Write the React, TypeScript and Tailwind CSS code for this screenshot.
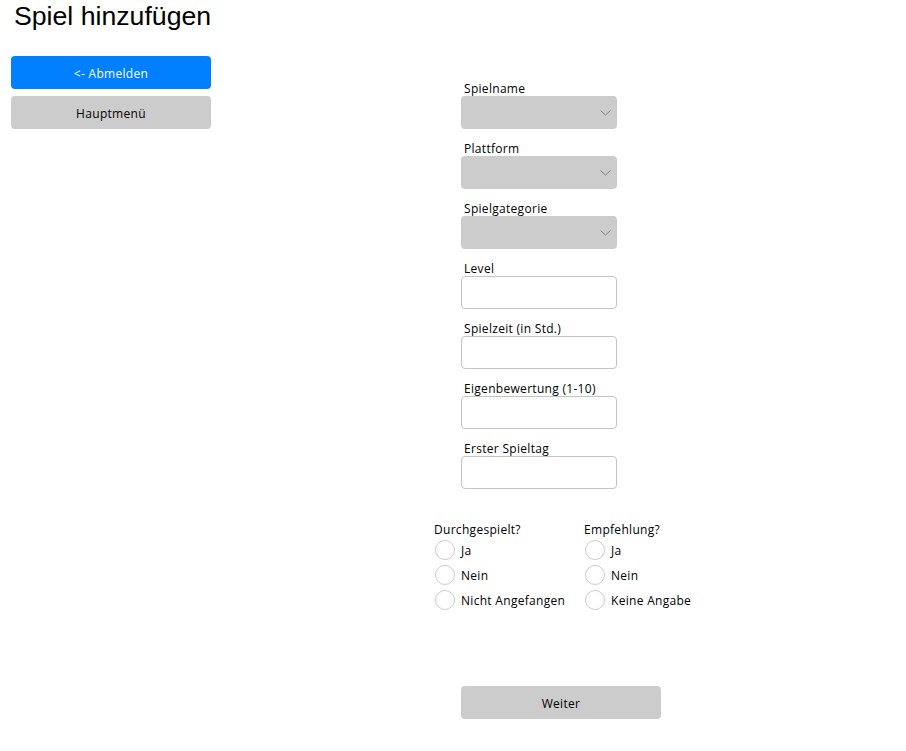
import React from "react";

const Chevron = () => (
  <svg width="11" height="6" viewBox="0 0 11 6" className="absolute right-[6px] top-[14px]">
    <path d="M0.5 0.5 L5.5 5 L10.5 0.5" fill="none" stroke="#808080" strokeWidth="1" />
  </svg>
);

const SelectField = ({ label }: { label: string }) => (
  <div className="flex flex-col">
    <div className="h-[16px] leading-[18px] pl-[3px] text-black">{label}</div>
    <div className="relative h-[33px] w-[156px] rounded-[4px] bg-[#cccccc]">
      <Chevron />
    </div>
  </div>
);

const InputField = ({ label }: { label: string }) => (
  <div className="flex flex-col">
    <div className="h-[16px] leading-[18px] pl-[3px] text-black">{label}</div>
    <div className="h-[33px] w-[156px] rounded-[4px] border border-[#c4c4c4] bg-white" />
  </div>
);

const RadioGroup = ({ title, options }: { title: string; options: string[] }) => (
  <div className="flex w-[150px] flex-col">
    <div className="h-[16px] leading-[18px] text-black">{title}</div>
    {options.map((o) => (
      <div key={o} className="flex h-[25px] items-center">
        <div className="ml-[1px] h-[20px] w-[20px] rounded-full border border-[#cdcdcd] bg-white" />
        <span className="ml-[6px] pt-[2px] text-black whitespace-nowrap">{o}</span>
      </div>
    ))}
  </div>
);

export default function App() {
  return (
    <div
      className="flex h-[751px] w-[906px] bg-white text-[12px] tracking-[0.3px]"
      style={{ fontFamily: '"Open Sans", "Noto Sans", sans-serif' }}
    >
      <div className="flex w-[211px] shrink-0 flex-col pl-[11px]">
        <h1
          className="whitespace-nowrap pl-[3px] text-[26.67px] leading-[32px] tracking-normal text-black"
          style={{ fontFamily: '"Liberation Sans", Arial, sans-serif' }}
        >
          Spiel hinzufügen
        </h1>
        <div className="mt-[24px] flex flex-col gap-[7px]">
          <button className="flex h-[33px] w-[200px] items-center justify-center rounded-[4px] bg-[#0080ff] pt-[2px] text-white">
            &lt;- Abmelden
          </button>
          <button className="flex h-[33px] w-[200px] items-center justify-center rounded-[4px] bg-[#cccccc] pt-[2px] text-black">
            Hauptmenü
          </button>
        </div>
      </div>
      <div className="ml-[223px] flex flex-col pt-[80px]">
        <div className="flex flex-col gap-[11px] pl-[27px]">
          <SelectField label="Spielname" />
          <SelectField label="Plattform" />
          <SelectField label="Spielgategorie" />
          <InputField label="Level" />
          <InputField label="Spielzeit (in Std.)" />
          <InputField label="Eigenbewertung (1-10)" />
          <InputField label="Erster Spieltag" />
        </div>
        <div className="mt-[32px] flex">
          <RadioGroup title="Durchgespielt?" options={["Ja", "Nein", "Nicht Angefangen"]} />
          <RadioGroup title="Empfehlung?" options={["Ja", "Nein", "Keine Angabe"]} />
        </div>
        <div className="mt-[74px] pl-[27px]">
          <button className="flex h-[33px] w-[200px] items-center justify-center rounded-[4px] bg-[#cccccc] pt-[2px] text-black">
            Weiter
          </button>
        </div>
      </div>
    </div>
  );
}
